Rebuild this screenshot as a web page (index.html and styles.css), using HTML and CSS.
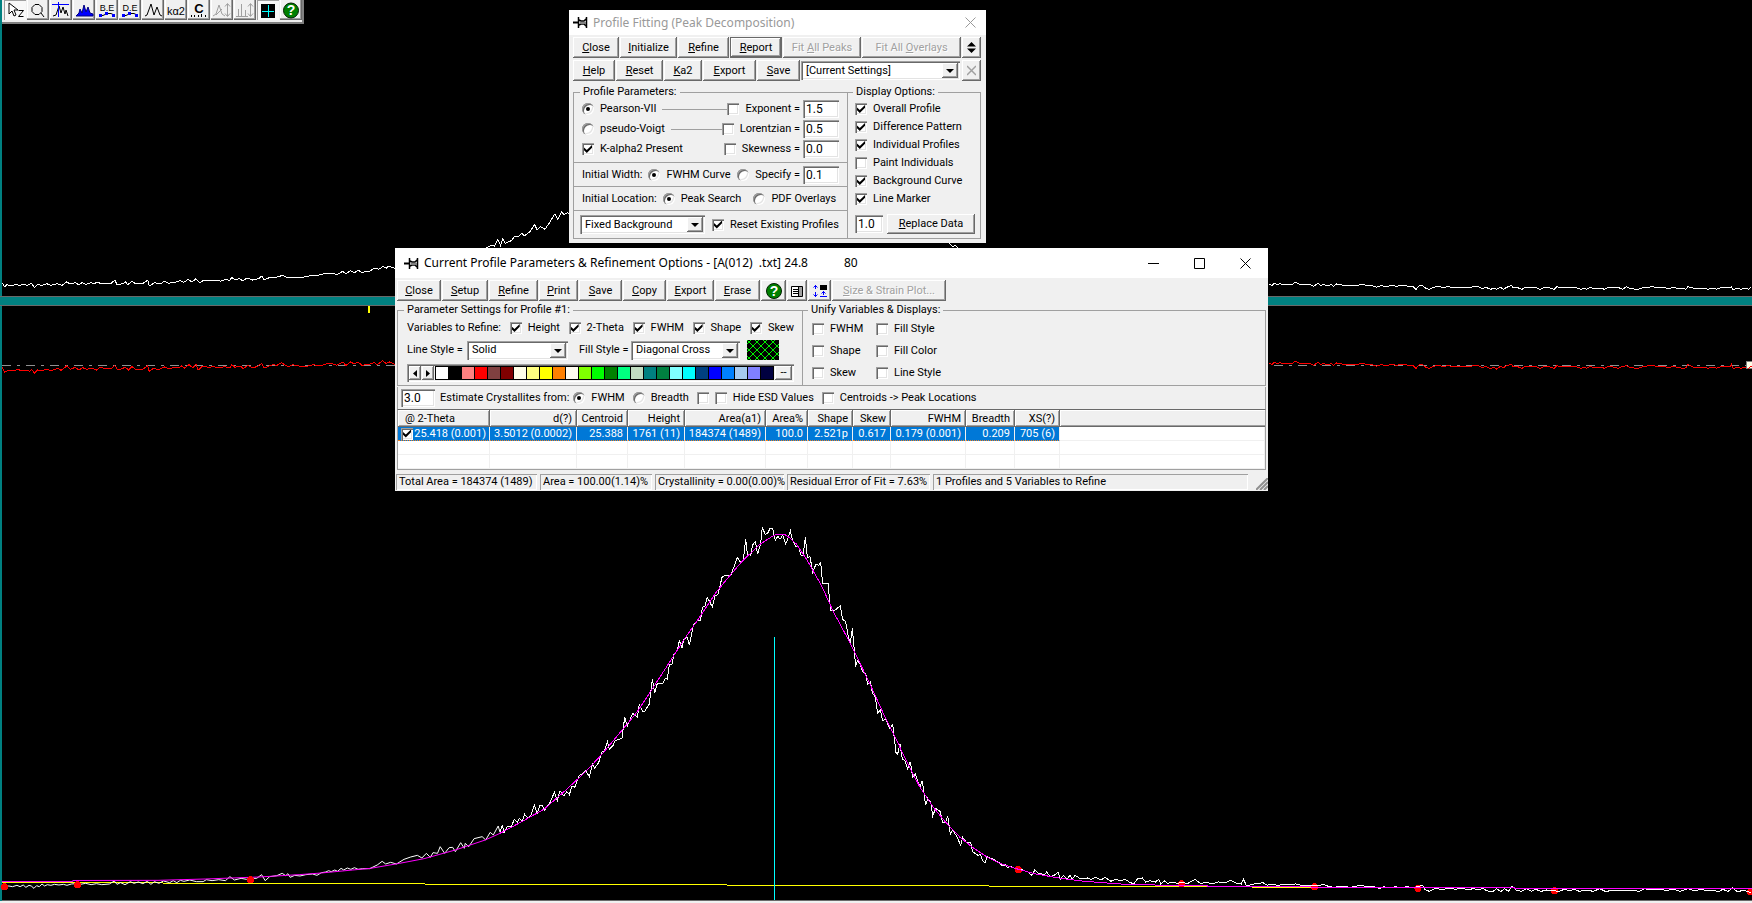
FILE: index.html
```html
<!DOCTYPE html>
<html lang="en">
<head>
<meta charset="utf-8">
<title>Profile Fitting</title>
<link rel="stylesheet" href="styles.css">
</head>
<body>
<main class="desktop">
<svg class="chart" viewBox="0 0 1752 901" preserveAspectRatio="none" role="img" aria-label="Diffraction pattern with fitted profile">
  <rect width="1752" height="901" fill="#000"/>
  <rect width="2" height="901" fill="#008080"/>
  <rect x="0" y="296" width="1752" height="10" fill="#696969"/>
  <rect x="0" y="297" width="1752" height="8" fill="#008080"/>
  <rect x="2" y="900" width="1750" height="1" fill="#696969"/>
  <rect x="368" y="306" width="2" height="7" fill="#ff0"/>
  <path d="M2 365.5H1752" stroke="#909090" stroke-dasharray="9 6 3 6"/>
  <g transform="translate(0 190) scale(.38265 .33333)">
    <polyline class="trace white" points="5,278 12,290 18,284 28,287 40,284 52,286 62,283 72,286 82,280 90,292 98,284 110,286 122,281 132,286 150,281 162,286 174,276 184,282 196,278 206,284 214,278 224,283 238,278 246,282 254,276 264,281 290,281 300,270 306,284 320,281 328,276 334,284 344,274 356,282 372,282 386,270 390,288 404,278 418,282 430,274 440,280 460,276 470,272 480,277 492,268 502,276 512,266 522,278 534,270 548,272 570,270 576,274 590,268 600,272 606,262 614,270 626,266 634,272 646,264 660,270 676,266 684,258 690,270 702,264 720,262 740,256 748,262 760,262 790,262 808,258 824,258 850,250 870,250 880,254 896,244 904,252 915,242 926,248 936,241 946,247 966,244 978,234 990,238 1000,230 1010,234 1016,228 1034,236"/>
    <polyline class="trace white" points="1244,177 1270,175 1284,165 1292,168 1301,148 1308,166 1314,146 1320,160 1336,152 1346,138 1354,140 1364,130 1370,138 1384,126 1397,104 1404,120 1412,110 1420,114 1424,118 1436,98 1450,72 1458,88 1468,66 1474,74 1484,68 1488,74"/>
    <polyline class="trace red" points="5,532 12,546 22,541 34,543 46,538 58,543 68,540 78,544 82,538 90,549 98,540 108,543 120,538 134,542 150,535 160,541 174,528 184,538 196,532 206,540 216,533 226,538 240,534 252,540 262,532 278,537 290,536 300,526 308,540 318,536 328,532 336,540 345,530 356,539 372,539 386,527 390,544 400,536 416,538 430,531 442,536 456,532 466,534 474,528 482,534 494,524 504,534 512,522 518,540 530,528 545,532 560,530 572,534 586,530 600,534 606,524 614,532 628,528 636,536 648,526 662,534 674,528 684,520 690,534 700,530 712,524 724,526 736,518 746,526 754,530 764,524 780,528 800,530 818,524 838,528 852,522 866,520 880,526 896,516 904,526 916,516 926,522 936,516 946,526 966,522 978,518 986,524 1000,512 1008,520 1018,516 1034,524"/>
  </g>
  <polyline class="trace white" points="949,243 953,247 955,245 958,248"/>
  <g transform="translate(1250 260) scale(.33333)">
    <polyline class="trace white" points="56,73 62,74 66,76 72,70 82,74 90,70 98,74 110,72 128,73 136,66 146,72 156,74 180,74 190,79 204,70 212,76 222,73 230,77 244,74 250,79 260,72 280,76 300,76 318,78 334,72 350,76 370,78 380,82 394,76 408,81 424,76 440,79 452,76 480,79 490,80 498,89 506,78 516,76 526,84 538,89 548,82 570,79 580,84 592,80 610,82 650,82 684,80 696,86 708,82 722,88 732,84 740,88 752,82 760,88 770,82 784,76 790,84 800,82 816,88 826,82 850,82 862,84 870,88 884,82 900,84 912,88 920,80 932,84 960,84 982,84 994,88 1002,84 1010,88 1020,82 1034,86 1050,84 1064,88 1076,82 1090,84 1104,82 1118,88 1130,80 1140,86 1165,88 1180,83 1210,80 1222,84 1240,82 1256,86 1270,82 1284,86 1300,84 1308,88 1314,80 1330,84 1348,87 1360,84 1374,88 1390,84 1400,88 1414,82 1440,84 1444,80 1450,90 1460,84 1474,88 1484,84 1496,88 1502,82"/>
  </g>
  <g transform="translate(1250 339) scale(.33333)">
    <polyline class="trace red" points="56,73 62,74 66,76 72,70 82,74 90,70 98,74 110,72 128,73 136,66 146,72 156,74 180,74 190,79 204,70 212,76 222,73 230,77 244,74 250,79 260,72 280,76 300,76 318,78 334,72 350,76 370,78 380,82 394,76 408,81 424,76 440,79 452,76 480,79 490,80 498,89 506,78 516,76 526,84 538,89 548,82 570,79 580,84 592,80 610,82 650,82 684,80 696,86 708,82 722,90 732,84 740,90 752,82 760,86 770,80 784,76 790,84 800,82 816,88 826,82 850,82 862,84 870,88 884,82 900,84 912,88 920,80 932,84 960,84 982,84 994,88 1002,84 1010,88 1020,82 1034,86 1050,84 1064,88 1076,82 1090,84 1104,88 1118,82 1130,80 1140,86 1165,88 1180,83 1210,78 1222,84 1240,82 1256,86 1270,82 1284,86 1300,88 1308,86 1314,76 1330,84 1348,87 1360,84 1374,88 1390,84 1400,88 1414,82 1440,84 1444,76 1450,90 1460,84 1474,88 1484,84 1496,88 1502,82"/>
  </g>
  <rect x="1746.500" y="361.500" width="8" height="7" fill="#ffffe8" stroke="#808080"/>
  <path d="M1748 369l2-2 2-1" stroke="#f00" fill="none"/>
  <g fill="none" stroke="#ff0">
    <path d="M2 882.5H163M163 883.5H425M425 884.5H727M727 885.5H989M989 886.5H1215M1252 887.5H1327"/>
  </g>
  <g transform="translate(0 700) scale(.44643 .33333)">
    <polyline class="trace white" points="4,559 20,558 28,560 38,556 45,560 52,555 58,562 65,556 70,558 76,565 82,557 88,560 94,552 100,558 106,554 114,556 122,553 132,555 142,553 150,556 160,552 170,551 180,553 192,550 204,554 216,551 228,554 245,552 256,543 262,553 270,548 280,554 292,545 300,550 310,546 320,551 330,544 338,553 346,545 356,550 366,543 380,548 388,542 396,548 404,541 412,544 425,540 440,545 455,545 462,539 475,542 490,539 505,542 515,530 525,540 540,535 552,538 560,535 575,535 586,524 594,542 604,530 620,527 632,520 640,527 645,521 650,532 660,526 672,528 685,524 700,522 710,526 720,518 730,516 736,512 742,515 750,510 756,514 764,505 770,510 778,504 786,508 794,503 802,508 812,506 828,506 845,495 856,484 864,492 875,487 888,492 905,478 920,471 935,466 945,474 955,460 964,472 970,458 980,460 986,440 996,460 1006,443 1014,442 1020,455 1032,428 1040,445 1042,430 1050,440 1062,416 1080,410 1088,420 1098,397 1105,405 1116,378 1120,397"/>
    <polyline class="trace magenta" points="4,544.5 163,544.5 163,541.5 354,541 460,537 580,531 670,524 720,519 790,510 830,505 895,490 950,476 1020,450 1087,420 1120,400"/>
  </g>
  <g transform="translate(500 500) scale(.33333)">
    <polyline class="trace white" points="0,997 7,974 12,998 22,978 34,979 43,958 52,966 58,955 66,964 74,943 84,954 92,948 103,916 112,940 120,915 128,918 134,930 150,908 163,877 172,901 180,872 192,888 200,875 208,884 216,858 224,862 238,826 248,822 256,811 268,829 278,792 284,804 296,788 306,755 314,752 322,725 328,748 340,735 345,722 366,715 374,652 382,678 398,640 412,652 418,613 428,634 434,634 448,612 457,538 464,580 472,550 488,550 496,535 502,538 508,494 516,492 522,461 532,452 538,422 546,443 552,417 562,412 568,436 580,375 592,362 602,360 607,322 615,318 622,292 637,321 645,288 654,283 666,232 676,226 692,226 702,200 712,172 722,188 730,180 737,118 742,162 752,166 758,135 766,125 773,163 782,130 787,80 795,103 803,100 810,85 818,86 826,121 834,108 840,118 848,106 857,133 865,112 871,92 878,122 888,140 896,140 903,166 909,168 916,112 922,172 930,170 938,216 948,193 956,196 962,187 968,250 984,250 992,332 1006,330 1021,317 1028,358 1037,365 1044,405 1051,430 1057,385 1063,450 1067,500 1072,482 1080,492 1088,515 1097,520 1103,552 1111,545 1117,578 1126,592 1133,640 1141,630 1148,662 1157,658 1170,686 1178,673 1188,758 1193,762 1200,732 1207,778 1215,782 1223,807 1231,785 1238,830 1246,822 1260,862 1267,842 1277,916 1283,895 1292,905 1298,948 1307,925 1321,935 1328,968 1336,968 1343,948 1351,1003 1357,990 1370,1008 1382,1036 1388,1012 1400,1028 1412,1028 1418,1055 1434,1066 1442,1064 1448,1082 1455,1088 1462,1070 1480,1078 1500,1090"/>
    <polyline class="trace magenta" points="0,1000 60,968 133,927 200,868 260,812 310,758 370,686 412,635 460,562 500,500 550,422 600,350 650,275 690,226 730,180 760,152 780,133 800,120 820,107 835,102 855,104 870,114 890,133 920,178 965,258 1000,335 1050,428 1110,552 1150,640 1180,700 1220,785 1260,862 1300,922 1340,970 1380,1012 1420,1044 1460,1070 1500,1090"/>
  </g>
  <g fill="#f00">
    <circle cx="4.500" cy="886.500" r="3.500"/><circle cx="77.500" cy="884.500" r="3.500"/><circle cx="250.500" cy="879.500" r="3.500"/><circle cx="1018.500" cy="869.500" r="3.500"/><circle cx="1181.500" cy="883.500" r="3.500"/><circle cx="1314.500" cy="886.500" r="3.500"/><circle cx="1418" cy="888.500" r="3.500"/><circle cx="1554.500" cy="890.500" r="3.500"/><circle cx="1750.500" cy="891.500" r="3.500"/>
  </g>
  <g transform="translate(900 750) scale(.54337 .33333)">
    <polyline class="trace white" points="184,340 188,347 194,345 198,352 204,350 212,356 222,358 235,366 243,376 248,360 255,370 266,374 270,366 276,380 286,374 291,366 295,388 301,376 307,388 313,376 317,388 322,376 332,386 345,384 352,388 360,382 370,390 378,382 388,394 396,388 406,392 414,388 422,396 430,402 438,385 446,384 452,396 460,392 470,396 476,388 480,402 486,392 492,400 503,396 510,400 518,398 530,400 543,388 554,402 562,396 575,402 586,396 600,398 608,390 620,400 628,402 632,388 638,408 652,402 668,398 676,406 684,402 694,406 706,404 728,402 738,406 752,406 762,408 780,404 790,410 800,412 812,408 828,412 848,406 860,410 870,408 882,416 890,410 898,414 912,410 924,414 932,410 945,413 962,406 966,418 974,424 984,416 1000,418 1010,414 1022,418 1034,414 1044,419 1056,416 1064,420 1072,415 1080,422 1090,426 1098,416 1106,425 1112,416 1120,424 1126,408 1134,420 1144,424 1154,416 1162,424 1170,418 1180,424 1190,420 1204,422 1212,425 1222,418 1234,422 1240,417 1250,424 1262,420 1276,424 1288,416 1298,424 1310,422 1330,423 1344,420 1360,424 1370,416 1384,420 1396,417 1410,421 1424,418 1436,424 1450,416 1462,422 1474,418 1486,422 1496,420 1506,426 1514,418 1524,424 1532,414 1542,426 1552,420 1566,428"/>
    <polyline class="trace magenta" points="184,340 218,358 250,372 300,386 340,394 380,399 425,404 490,405.5 580,408.5 790,411.5 1130,411.5 1130,414.5 1568,414.5"/>
  </g>
  <path d="M774.5 637V900" stroke="#0ff"/>
</svg>
<div class="baseline"></div>

<nav class="toolbar" aria-label="Tools">
  <button class="tool on" aria-label="Zoom cursor"><svg viewBox="0 0 22 20"><path d="M5 3v11l3-3 2 5 2-1-2-5h4z" fill="#fff" stroke="#000"/><path d="M14.500 10.500h5l-5 6h5" fill="none" stroke="#000"/></svg></button>
  <button class="tool" aria-label="Magnify"><svg viewBox="0 0 22 20"><path d="M8 4.500h4l3 3v4l-3 3H8l-3-3v-4zM14 13l3 4" fill="none" stroke="#000"/></svg></button>
  <button class="tool" aria-label="Peak search"><svg viewBox="0 0 22 20"><path d="M3 16l3-1 3-9 2 7 2-6 2 7 1-4 2 6" fill="none" stroke="#000"/><path d="M2 4.500h17M8.500 2v15" stroke="#00f"/></svg></button>
  <button class="tool" aria-label="Fill peaks"><svg viewBox="0 0 22 20"><path d="M3 16l3-3 1-4 2 4 2-8 2 7 2-5 2 6 3 1v2z" fill="#00f" stroke="#000080"/></svg></button>
  <button class="tool" aria-label="Background edit"><svg viewBox="0 0 22 20"><text class="glyph" x="11" y="11">B.E</text><path d="M3 15.500h4l4-2h4l4 2" fill="none" stroke="#000"/><path d="M3 14h3v3H3zM9 12h3v3H9zM16 14h3v3h-3z" fill="#00f"/></svg></button>
  <button class="tool" aria-label="Data edit"><svg viewBox="0 0 22 20"><text class="glyph" x="11" y="11">D.E</text><path d="M3 15.500h4l4-2h4l4 2" fill="none" stroke="#000"/><path d="M3 14h3v3H3zM9 12h3v3H9zM16 14h3v3h-3z" fill="#00f"/></svg></button>
  <button class="tool" aria-label="Smooth"><svg viewBox="0 0 22 20"><path d="M3 16l2-1 4-11 3 11 3-8 3 8 2 1" fill="none" stroke="#000"/></svg></button>
  <button class="tool" aria-label="K alpha 2"><svg viewBox="0 0 22 20"><text class="glyph big" x="11" y="15">kα2</text></svg></button>
  <button class="tool" aria-label="Calibrate"><svg viewBox="0 0 22 20"><text class="glyph heavy" x="11" y="13">C</text><path d="M3.500 17v-2m3 2v-2m4 2v-2m3 2v-3m4 3v-2" stroke="#000"/></svg></button>
  <button class="tool" aria-label="Scale peaks" disabled><svg viewBox="0 0 22 20"><path d="M2 16l3-2 3-9 3 9 3 2M16.500 4v12M14 6.500l2.500-3 2.500 3M14 13.500l2.500 3 2.500-3M5 15l6-6" fill="none" stroke="#a0a0a0"/></svg></button>
  <button class="tool" aria-label="Scale lines" disabled><svg viewBox="0 0 22 20"><path d="M2 16.500h12M4.500 16V9m3 7V4m4 12V10M16.500 4v12M14 6.500l2.500-3 2.500 3M14 13.500l2.500 3 2.500-3" fill="none" stroke="#a0a0a0"/></svg></button>
  <button class="tool on" aria-label="Grid"><svg viewBox="0 0 22 20"><path d="M4 4h14v14H4z" fill="#000"/><path d="M5 11.500h12M11.500 5v12" stroke="#0ff"/></svg></button>
  <button class="tool" aria-label="Help"><svg viewBox="0 0 22 20"><circle cx="11" cy="10.500" r="7.500" fill="#008000" stroke="#002000"/><text class="glyph mark" x="11" y="15">?</text></svg></button>
</nav>

<section class="window fitting" aria-label="Profile Fitting">
  <header class="titlebar">
    <svg class="pin" viewBox="0 0 15 11"><path d="M0 5.500h6" stroke="#000" stroke-width="2"/><path d="M5.500 0v11M6 3l2 1h3l2-2M6 8l2-1h3l2 2M13.500 0v11" fill="none" stroke="#000" stroke-width="1.500"/><path d="M7 5h6v2H7z" fill="#808080"/></svg>
    <h1 class="title muted">Profile Fitting (Peak Decomposition)</h1>
    <button class="caption muted" aria-label="Close window"><svg viewBox="0 0 11 11"><path d="M.5.5l10 10M10.500.5l-10 10" stroke="#999"/></svg></button>
  </header>
  <div class="bar fit-row-a">
    <button class="btn"><u>C</u>lose</button><button class="btn"><u>I</u>nitialize</button><button class="btn"><u>R</u>efine</button><button class="btn default"><u>R</u>eport</button><button class="btn" disabled>Fit <u>A</u>ll Peaks</button><button class="btn" disabled>Fit All <u>O</u>verlays</button><button class="btn" aria-label="Resize"><svg class="arrows" viewBox="0 0 9 11"><path d="M0 4.500L4.500 0 9 4.500zM0 6.500L4.500 11 9 6.500z"/></svg></button>
  </div>
  <div class="bar fit-row-b">
    <button class="btn"><u>H</u>elp</button><button class="btn"><u>R</u>eset</button><button class="btn"><u>K</u>a2</button><button class="btn"><u>E</u>xport</button><button class="btn"><u>S</u>ave</button>
    <span class="drop"><select aria-label="Settings"><option>[Current Settings]</option></select></span>
    <button class="btn" disabled aria-label="Delete"><svg class="arrows" viewBox="0 0 9 9"><path d="M0 0l9 9M9 0L0 9" stroke="#a0a0a0" stroke-width="1.500"/></svg></button>
  </div>
  <div class="fit-body">
    <fieldset class="group">
      <legend>Profile Parameters:</legend>
      <div class="stack">
        <div class="line"><label class="opt"><input type="radio" name="shape" checked>Pearson-VII</label><i class="rule"></i><label class="opt"><input type="checkbox">Exponent =</label><input class="num" type="text" value="1.5" aria-label="Exponent"></div>
        <div class="line"><label class="opt"><input type="radio" name="shape">pseudo-Voigt</label><i class="rule"></i><label class="opt"><input type="checkbox">Lorentzian =</label><input class="num" type="text" value="0.5" aria-label="Lorentzian"></div>
        <div class="line"><label class="opt"><input type="checkbox" checked>K-alpha2 Present</label><label class="opt end"><input type="checkbox">Skewness =</label><input class="num" type="text" value="0.0" aria-label="Skewness"></div>
      </div>
      <div class="line sep width-row"><span>Initial Width:</span><label class="opt"><input type="radio" name="width" checked>FWHM Curve</label><label class="opt end"><input type="radio" name="width">Specify =</label><input class="num" type="text" value="0.1" aria-label="Width"></div>
      <div class="line sep width-row"><span>Initial Location:</span><label class="opt"><input type="radio" name="loc" checked>Peak Search</label><label class="opt"><input type="radio" name="loc">PDF Overlays</label></div>
      <div class="line sep last-row"><span class="drop back"><select aria-label="Background"><option>Fixed Background</option></select></span><label class="opt"><input type="checkbox" checked>Reset Existing Profiles</label></div>
    </fieldset>
    <fieldset class="group joined">
      <legend>Display Options:</legend>
      <div class="stack display">
        <label class="opt"><input type="checkbox" checked>Overall Profile</label>
        <label class="opt"><input type="checkbox" checked>Difference Pattern</label>
        <label class="opt"><input type="checkbox" checked>Individual Profiles</label>
        <label class="opt"><input type="checkbox">Paint Individuals</label>
        <label class="opt"><input type="checkbox" checked>Background Curve</label>
        <label class="opt"><input type="checkbox" checked>Line Marker</label>
      </div>
      <div class="replace"><input class="num" type="text" value="1.0" aria-label="Factor"><button class="btn"><u>R</u>eplace Data</button></div>
    </fieldset>
  </div>
</section>

<section class="window params" aria-label="Current Profile Parameters">
  <header class="titlebar tall">
    <svg class="pin" viewBox="0 0 15 11"><path d="M0 5.500h6" stroke="#000" stroke-width="2"/><path d="M5.500 0v11M6 3l2 1h3l2-2M6 8l2-1h3l2 2M13.500 0v11" fill="none" stroke="#000" stroke-width="1.500"/><path d="M7 5h6v2H7z" fill="#808080"/></svg>
    <h1 class="title">Current Profile Parameters &amp; Refinement Options - [A(012)&nbsp; .txt] 24.8<span class="extra">80</span></h1>
    <button class="caption" aria-label="Minimize"><svg viewBox="0 0 11 11"><path d="M0 5.500h11" stroke="#000"/></svg></button>
    <button class="caption" aria-label="Maximize"><svg viewBox="0 0 11 11"><path d="M.5.5h10v10H.5z" fill="none" stroke="#000"/></svg></button>
    <button class="caption" aria-label="Close window"><svg viewBox="0 0 11 11"><path d="M.5.5l10 10M10.500.5l-10 10" stroke="#000"/></svg></button>
  </header>
  <div class="bar param-row">
    <button class="btn"><u>C</u>lose</button><button class="btn"><u>S</u>etup</button><button class="btn"><u>R</u>efine</button><button class="btn"><u>P</u>rint</button><button class="btn"><u>S</u>ave</button><button class="btn"><u>C</u>opy</button><button class="btn"><u>E</u>xport</button><button class="btn"><u>E</u>rase</button>
    <button class="btn" aria-label="Help"><svg class="icon" viewBox="0 0 18 18"><circle cx="9" cy="9" r="7.500" fill="#008000" stroke="#002000"/><text class="glyph mark" x="9" y="14">?</text></svg></button>
    <button class="btn" aria-label="Layout"><svg class="icon" viewBox="0 0 18 18"><path d="M3.500 4.500h11v10h-11z" fill="#fff" stroke="#000"/><path d="M5 7.500h5M5 9.500h5M5 11.500h5M10.500 4v10" stroke="#000"/><path d="M11 5h3v9h-3z" fill="#a0a0a0"/></svg></button>
    <button class="btn" aria-label="Arrange"><svg class="icon" viewBox="0 0 18 18"><path d="M4.500 3v4M4.500 10v5M2.500 5.500l2-2 2 2M2.500 12.500l2 2 2-2M12.500 9v4M10.500 11.500l2-2 2 2M9 14.500h7" fill="none" stroke="#00f"/><path d="M9 3h7v5H9z"/></svg></button>
    <button class="btn" disabled><u>S</u>ize &amp; Strain Plot...</button>
  </div>
  <div class="param-body">
    <fieldset class="group">
      <legend>Parameter Settings for Profile #1:</legend>
      <div class="settings">
        <div class="vars"><span>Variables to Refine:</span><label class="opt"><input type="checkbox" checked>Height</label><label class="opt"><input type="checkbox" checked>2-Theta</label><label class="opt"><input type="checkbox" checked>FWHM</label><label class="opt"><input type="checkbox" checked>Shape</label><label class="opt"><input type="checkbox" checked>Skew</label></div>
        <div class="styles">
          <label for="ls">Line Style =</label><span class="drop"><select id="ls"><option>Solid</option></select></span>
          <label class="fill-label" for="fs">Fill Style =</label><span class="drop"><select id="fs"><option>Diagonal Cross</option></select></span>
          <svg class="hatch" viewBox="0 0 32 20"><rect width="32" height="20"/><path d="M-2 6l8-8M-2 14L14-2M-2 22L22-2M4 24L30-2M12 24L38-2M20 24l18-18M28 24l10-10M-2 14l10 10M-2 6l18 18M-2-2l26 26M6-2l26 26M14-2l20 20M22-2l12 12M30-2l4 4" stroke="#00f000" fill="none"/></svg>
        </div>
        <div class="palette">
          <button class="btn nudge" aria-label="Previous colours"><svg viewBox="0 0 4 7"><path d="M4 0v7L0 3.500z"/></svg></button><button class="btn nudge" aria-label="Next colours"><svg viewBox="0 0 4 7"><path d="M0 0v7l4-3.500z"/></svg></button>
          <div class="swatches"><i style="background:#fff"></i><i style="background:#000"></i><i style="background:#ff8080"></i><i style="background:#f00"></i><i style="background:#804040"></i><i style="background:#800000"></i><i style="background:#ffffe8"></i><i style="background:#ffff80"></i><i style="background:#ff0"></i><i style="background:#ff8000"></i><i style="background:#fffbf0"></i><i style="background:#80ff00"></i><i style="background:#0f0"></i><i style="background:#008000"></i><i style="background:#00ff80"></i><i style="background:#c0dcc0"></i><i style="background:#008080"></i><i style="background:#008040"></i><i style="background:#80ffff"></i><i style="background:#0ff"></i><i style="background:#004080"></i><i style="background:#00f"></i><i style="background:#0080ff"></i><i style="background:#a6caf0"></i><i style="background:#8080ff"></i><i style="background:#000040"></i></div>
          <button class="btn more">--</button>
        </div>
      </div>
    </fieldset>
    <fieldset class="group joined">
      <legend>Unify Variables &amp; Displays:</legend>
      <div class="unify">
        <label class="opt"><input type="checkbox">FWHM</label><label class="opt"><input type="checkbox">Fill Style</label>
        <label class="opt"><input type="checkbox">Shape</label><label class="opt"><input type="checkbox">Fill Color</label>
        <label class="opt"><input type="checkbox">Skew</label><label class="opt"><input type="checkbox">Line Style</label>
      </div>
    </fieldset>
  </div>
  <div class="estimate">
    <input class="num" type="text" value="3.0" aria-label="Estimate">
    <span class="lead">Estimate Crystallites from:</span>
    <label class="opt fwhm"><input type="radio" name="est" checked>FWHM</label>
    <label class="opt breadth"><input type="radio" name="est">Breadth</label>
    <input type="checkbox" aria-label="Option">
    <label class="opt hide"><input type="checkbox">Hide ESD Values</label>
    <label class="opt"><input type="checkbox">Centroids -&gt; Peak Locations</label>
  </div>
  <div class="list">
    <table>
      <colgroup><col class="w91"><col class="w87"><col class="w51"><col class="w57"><col class="w81"><col class="w42"><col class="w45"><col class="w38"><col class="w75"><col class="w49"><col class="w45"><col></colgroup>
      <thead><tr><th class="first">@ 2-Theta</th><th>d(?)</th><th>Centroid</th><th>Height</th><th>Area(a1)</th><th>Area%</th><th>Shape</th><th>Skew</th><th>FWHM</th><th>Breadth</th><th>XS(?)</th><th class="rest"></th></tr></thead>
      <tbody>
        <tr class="sel"><td class="first"><span class="cell"><input type="checkbox" checked aria-label="Profile 1"><span>25.418 (0.001)</span></span></td><td>3.5012 (0.0002)</td><td>25.388</td><td>1761 (11)</td><td>184374 (1489)</td><td>100.0</td><td>2.521p</td><td>0.617</td><td>0.179 (0.001)</td><td>0.209</td><td>705 (6)</td><td class="rest"></td></tr>
        <tr><td></td><td></td><td></td><td></td><td></td><td></td><td></td><td></td><td></td><td></td><td></td><td></td></tr>
        <tr><td></td><td></td><td></td><td></td><td></td><td></td><td></td><td></td><td></td><td></td><td></td><td></td></tr>
      </tbody>
    </table>
  </div>
  <footer class="status">
    <span>Total Area = 184374 (1489)</span><span>Area = 100.00(1.14)%</span><span>Crystallinity = 0.00(0.00)%</span><span>Residual Error of Fit = 7.63%</span><span>1 Profiles and 5 Variables to Refine</span>
    <svg class="grip" viewBox="0 0 12 12"><path d="M0 12L12 0M4 12l8-8M8 12l4-4" stroke="#909090" stroke-width="2"/></svg>
  </footer>
</section>
</main>
</body>
</html>
```
FILE: styles.css
```css
* { box-sizing: border-box; }
body { margin: 0; background: #000; font: 11px/14px Roboto, "Liberation Sans", Arial, sans-serif; color: #000; }
button, input, select { font: inherit; color: inherit; margin: 0; }
button { padding: 0; border: 0; background: #f0f0f0; }
i { font-style: normal; }

.desktop { position: relative; display: flex; flex-direction: column; height: 100vh; overflow: hidden; }
.chart { display: block; width: 100%; flex: 1; min-height: 0; shape-rendering: crispEdges; }
.baseline { height: 2px; background: #f0f0f0; }
.trace { fill: none; stroke-width: 1; vector-effect: non-scaling-stroke; }
.white { stroke: #fff; }
.red { stroke: #f00; }
.magenta { stroke: #f0f; }

/* main toolbar */
.toolbar { position: absolute; left: 2px; top: 0; display: flex; gap: 1px; padding: 0 0 2px 2px; background: #f0f0f0; border-right: 2px solid #808080; border-bottom: 2px solid #808080; }
.tool { width: 22px; height: 20px; box-shadow: inset -1px -1px #696969, inset -2px -2px #a0a0a0, inset 1px 0 #fff; }
.tool svg { display: block; width: 22px; height: 20px; }
.tool.on { background: #f8f8f8; box-shadow: inset 1px 1px #a0a0a0; }
.glyph { font: 9px "Liberation Sans", Arial, sans-serif; text-anchor: middle; }
.glyph.big { font-size: 11px; }
.glyph.heavy { font-size: 13px; font-weight: 700; }
.glyph.mark { font-size: 14px; font-weight: 700; fill: #fff; }

/* windows */
.window { position: absolute; background: #f0f0f0; display: flex; flex-direction: column; }
.fitting { left: 569px; top: 10px; width: 417px; padding-bottom: 4px; }
.params { left: 395px; top: 248px; width: 873px; }
.titlebar { display: flex; align-items: center; height: 25px; padding-left: 4px; background: #fff; }
.titlebar.tall { height: 30px; padding-left: 9px; }
.pin { width: 15px; height: 11px; margin-right: 5px; }
.title { flex: 1; margin: 0; font: 12px/18px "Noto Sans", "Open Sans", sans-serif; color: #000; }
.title.muted { color: #999; }
.extra { margin-left: 36px; }
.caption { width: 46px; height: 24px; display: flex; align-items: center; justify-content: center; background: none; }
.caption.muted { width: 31px; }
.caption svg { width: 11px; height: 11px; }

/* buttons */
.bar { display: grid; column-gap: 1px; padding: 2px 5px 0 4px; }
.fit-row-a { grid-template-columns: 46px 57px 51px 52px 78px 1fr 19px; }
.fit-row-b { grid-template-columns: 42px 47px 38px 53px 43px 1fr 19px; }
.fit-row-b .drop { margin: 1px 1px 1px 0; }
.param-row { grid-template-columns: 44px 46px 49px 39px 43px 43px 47px 45px 25px 20px 23px 114px; padding: 2px 2px 0; }
.btn { height: 21px; display: flex; align-items: center; justify-content: center; white-space: pre; box-shadow: inset -1px -1px #696969, inset 1px 1px #fff, inset -2px -2px #a0a0a0; }
.btn.default { box-shadow: inset 0 0 0 1px #696969, inset -2px -2px #696969, inset 2px 2px #fff, inset -3px -3px #a0a0a0; }
.btn:disabled { color: #a0a0a0; text-shadow: 1px 1px #fff; }
.arrows { width: 9px; height: 11px; }
.icon { width: 18px; height: 18px; }

/* fields */
.num { width: 36px; height: 18px; padding: 0 3px; border: 0; background: #fff; font-size: 12px; border-radius: 0; box-shadow: inset 1px 1px #a0a0a0, inset 2px 2px #696969, inset -1px -1px #fff, inset -2px -2px #e3e3e3; }
.drop { position: relative; display: block; height: 19px; }
.drop select { display: block; width: 100%; height: 100%; padding: 0 18px 0 5px; border: 0; border-radius: 0; appearance: none; background: #fff; box-shadow: inset 1px 1px #a0a0a0, inset 2px 2px #696969, inset -1px -1px #fff, inset -2px -2px #e3e3e3; }
.drop::before { content: ""; position: absolute; right: 2px; top: 2px; bottom: 2px; width: 16px; background: #f0f0f0; box-shadow: inset -1px -1px #696969, inset 1px 1px #fff, inset -2px -2px #a0a0a0; pointer-events: none; }
.drop::after { content: ""; position: absolute; right: 6px; top: 8px; border: 4px solid transparent; border-top-color: #000; border-bottom: 0; pointer-events: none; }
.opt { display: flex; align-items: center; gap: 6px; white-space: pre; }
input[type="checkbox"], input[type="radio"] { appearance: none; flex: none; width: 12px; height: 12px; background: #fff; display: grid; place-items: center; box-shadow: inset 1px 1px #a0a0a0, inset 2px 2px #696969, inset -1px -1px #fff, inset -2px -2px #e3e3e3; }
input[type="radio"] { border-radius: 50%; }
input[type="checkbox"]:checked::after { content: ""; width: 8px; height: 8px; background: #000; clip-path: polygon(0 30%, 35% 62%, 100% 0, 100% 35%, 35% 100%, 0 65%); }
input[type="radio"]:checked::after { content: ""; width: 4px; height: 4px; border-radius: 50%; background: #000; }

/* group boxes */
.group { min-width: 0; margin: 0; padding: 0; border: 1px solid #a0a0a0; }
.group.joined { border-left: 0; }
.group legend { margin-left: 6px; padding: 0 3px; height: 14px; }
.joined legend { margin-left: 5px; }
.fit-body { display: grid; grid-template-columns: 275px 1fr; padding: 4px 5px 0 4px; }
.stack { display: flex; flex-direction: column; padding-bottom: 3px; }
.line { display: flex; align-items: center; height: 20px; padding: 0 8px; white-space: pre; }
.line .num { margin-left: 3px; }
.line .end { margin-left: auto; }
.rule { flex: 1; height: 1px; margin-left: 6px; background: #a0a0a0; }
.sep { border-top: 1px solid #a0a0a0; height: 24px; }
.width-row { gap: 6px; }
.width-row .opt + .opt { margin-left: 6px; }
.width-row .opt.end { margin-left: auto; }
.width-row .num { margin-left: -3px; }
.last-row { height: 28px; padding-left: 6px; gap: 7px; }
.back { width: 125px; }
.display { gap: 4px; padding: 3px 8px 0 7px; }
.replace { display: flex; gap: 4px; align-items: center; padding: 8px 5px 4px 7px; }
.replace .num { width: 28px; }
.replace .btn { flex: 1; height: 20px; }

.param-body { display: grid; grid-template-columns: 406px 1fr; padding: 2px 2px 0; }
.settings { padding: 3px 8px 3px 9px; display: flex; flex-direction: column; gap: 4px; }
.vars { display: flex; justify-content: space-between; height: 16px; align-items: center; }
.styles { display: grid; grid-template-columns: 60px 101px 63px 109px 1fr; align-items: center; height: 20px; }
.fill-label { padding-left: 11px; white-space: pre; }
.hatch { width: 32px; height: 20px; margin-left: 7px; }
.palette { display: flex; align-items: center; gap: 1px; height: 18px; padding: 2px; box-shadow: inset 1px 1px #a0a0a0, inset 2px 2px #696969, inset -1px -1px #fff; }
.nudge { width: 12px; height: 14px; }
.nudge svg { width: 4px; height: 7px; }
.swatches { flex: 1; display: flex; height: 14px; gap: 1px; padding: 1px; background: #000; }
.swatches i { flex: 1; }
.more { width: 17px; height: 14px; }
.unify { display: grid; grid-template-columns: 64px 1fr; row-gap: 8px; padding: 5px 9px 0; }

.estimate { display: flex; align-items: center; height: 22px; margin: 1px 2px 0; padding-left: 3px; border: 1px solid #a0a0a0; border-width: 0 1px 0 1px; white-space: pre; }
.estimate .num { width: 34px; }
.lead { margin: 0 4px 0 5px; }
.fwhm, .hide { margin-right: 8px; }
.breadth { margin-right: 8px; }
.estimate input + .hide { margin-left: 6px; }

/* profile list */
.list { margin: 0 2px 0; border: 1px solid #a0a0a0; border-top-color: #696969; background: #fff; }
table { width: 100%; border-collapse: separate; border-spacing: 0; table-layout: fixed; }
.w91 { width: 92px; } .w87 { width: 87px; } .w51 { width: 51px; } .w57 { width: 57px; } .w81 { width: 81px; } .w42 { width: 42px; } .w45 { width: 45px; } .w38 { width: 38px; } .w75 { width: 75px; } .w49 { width: 49px; }
th { height: 17px; padding: 0 5px 0 0; font-weight: 400; text-align: right; background: #f0f0f0; box-shadow: inset -1px -1px #696969, inset 1px 1px #fff, inset -2px -2px #a0a0a0; white-space: nowrap; }
th.first { text-align: left; padding-left: 7px; }
th.rest { box-shadow: inset 0 -1px #696969, inset 1px 1px #fff, inset 0 -2px #a0a0a0; }
td { height: 14px; padding: 0 4px 0 0; text-align: right; line-height: 13px; border-right: 1px solid #f0f0f0; border-bottom: 1px solid #f0f0f0; white-space: nowrap; }
.sel td { background: #0078d7; color: #fff; border-bottom: 1px dotted #f08020; }
.sel td.rest { background: #fff; border-bottom: 1px solid #f0f0f0; }
td.first { padding: 0 3px; }
.cell { display: flex; align-items: center; justify-content: space-between; }
.cell input { color: #000; }

.status { display: grid; grid-template-columns: 141px 112px 129px 143px 1fr 12px; column-gap: 3px; padding: 4px 0 1px 1px; }
.status span { height: 16px; padding-left: 3px; line-height: 15px; white-space: nowrap; box-shadow: inset 1px 1px #a0a0a0, inset -1px -1px #fff; }
.status span:nth-child(5) { margin-right: 5px; }
.grip { width: 12px; height: 12px; align-self: end; }
```
